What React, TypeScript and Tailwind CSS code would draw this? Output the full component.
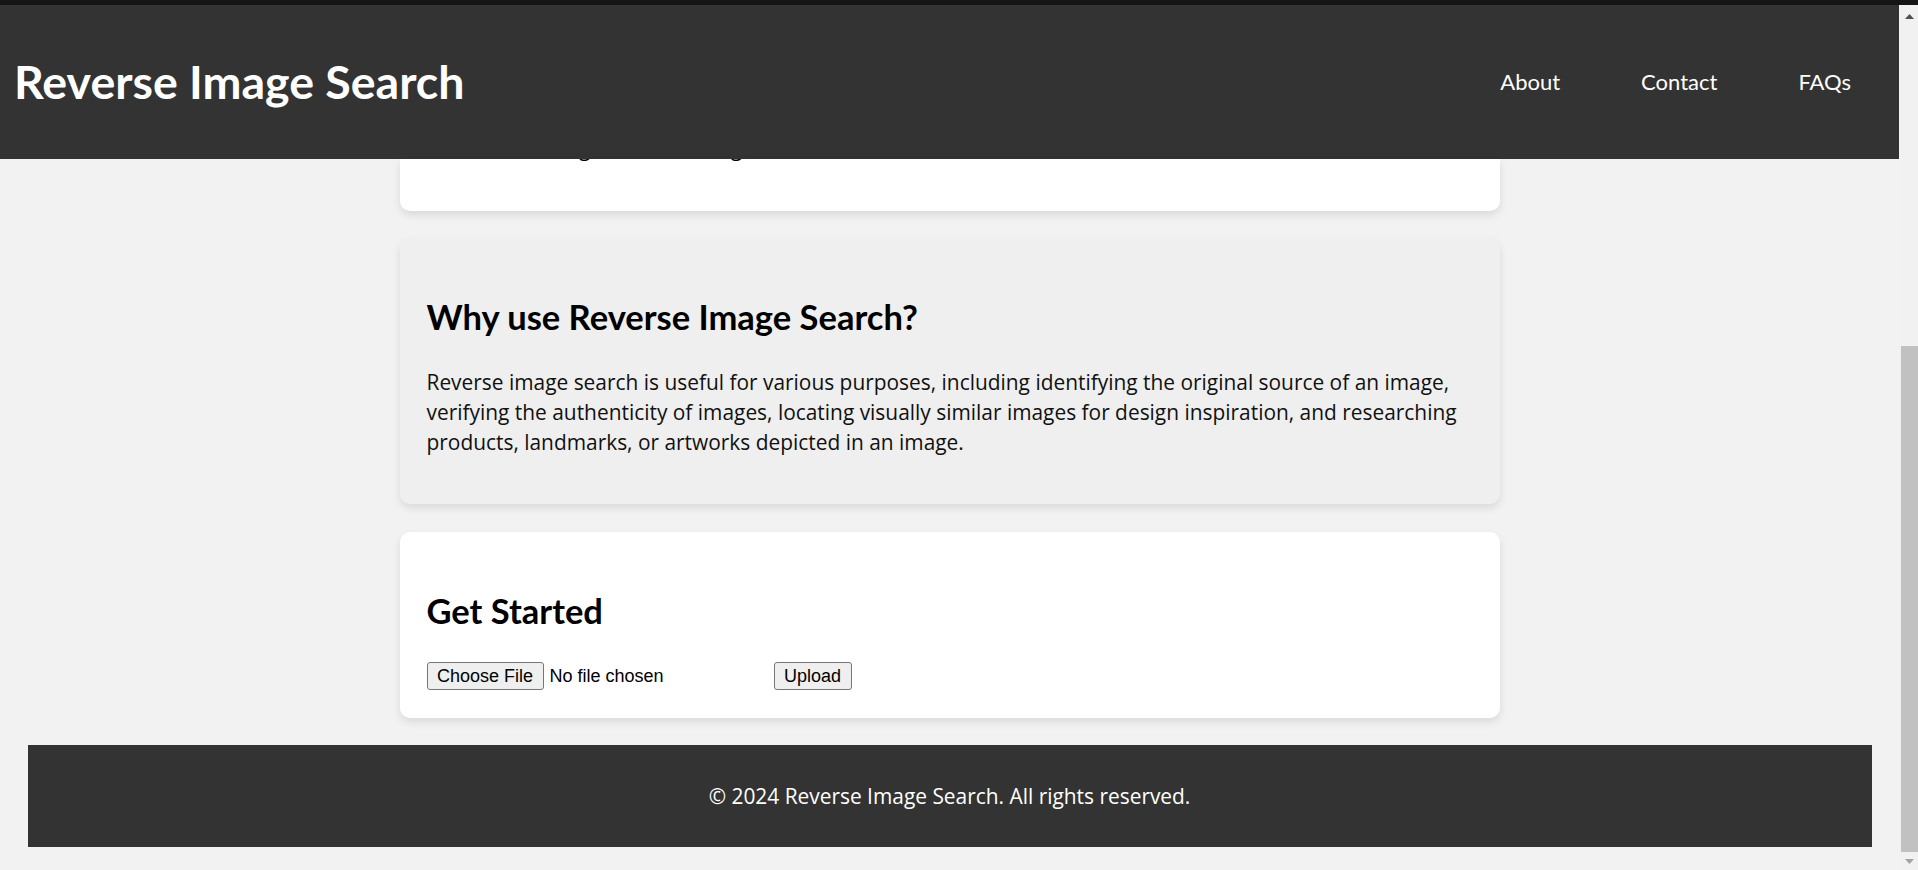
import React from "react";

function Card({
  children,
  className,
}: {
  children: React.ReactNode;
  className?: string;
}) {
  return (
    <section
      className={
        "rounded-[10px] shadow-[0_4px_8px_rgba(0,0,0,0.1)] px-[27px] " +
        (className ?? "")
      }
    >
      {children}
    </section>
  );
}

const body = "font-['Open_Sans',sans-serif]";

export default function App() {
  return (
    <div className="w-[1918px] h-[870px] overflow-hidden bg-[#f2f2f2] flex flex-col font-[Lato,sans-serif] text-black">
      <div className="h-[5px] shrink-0 bg-[#151515]" />
      <div className="flex flex-1 min-h-0">
        <div className="w-[1899px] shrink-0 flex flex-col">
          <header className="h-[154px] shrink-0 bg-[#333333] flex items-center justify-between pl-[14px] pr-[48px]">
            <h1 className="text-[46.5px] leading-[1.2] font-bold text-white">
              Reverse Image Search
            </h1>
            <nav className="flex items-center gap-[81px] text-[22px] leading-[1.2] text-white">
              <a>About</a>
              <a>Contact</a>
              <a>FAQs</a>
            </nav>
          </header>

          <main className="w-[1100px] mx-auto flex flex-col">
            {/* bottom of the first card, scrolled under the header */}
            <div className="h-[52px] bg-white rounded-b-[10px] shadow-[0_4px_8px_rgba(0,0,0,0.1)] px-[27px]">
              <div className="h-[2px] overflow-hidden">
                <p className={body + " -mt-[26px] text-[20.9px] leading-[30px] whitespace-nowrap"}>
                  a reference image to find its origin online.
                </p>
              </div>
            </div>

            <Card className="mt-[27px] bg-[#efefef] pt-[59px] pb-[47px]">
              <h2 className="text-[34.5px] leading-[40px] font-bold">
                Why use Reverse Image Search?
              </h2>
              <p className={body + " mt-[30px] text-[20.9px] leading-[30px] text-[#111]"}>
                Reverse image search is useful for various purposes, including
                identifying the original source of an image, verifying the
                authenticity of images, locating visually similar images for
                design inspiration, and researching products, landmarks, or
                artworks depicted in an image.
              </p>
            </Card>

            <Card className="mt-[28px] bg-white pt-[59px] pb-[28px]">
              <h2 className="text-[34.5px] leading-[40px] font-bold">
                Get Started
              </h2>
              <div className="mt-[31px] flex items-center font-['Liberation_Sans',Arial,sans-serif] text-[18px]">
                <div className="w-[347px] flex items-center">
                  <button className="h-[28px] px-[9.5px] border border-[#767676] bg-[#efefef] rounded-[3px] leading-none text-black">
                    Choose File
                  </button>
                  <span className="ml-[6px] leading-none">No file chosen</span>
                </div>
                <button className="h-[28px] px-[9.5px] border border-[#767676] bg-[#efefef] rounded-[3px] leading-none text-black">
                  Upload
                </button>
              </div>
            </Card>
          </main>

          <footer className={body + " mt-[27px] mx-[27.5px] h-[102px] pt-[2px] shrink-0 bg-[#333333] flex items-center justify-center text-white text-[20.9px]"}>
            <p>© 2024 Reverse Image Search. All rights reserved.</p>
          </footer>
        </div>

        {/* scrollbar */}
        <div className="w-[19px] shrink-0 flex flex-col bg-[#f1f1f1]">
          <div className="h-[22px] flex items-center justify-center pl-[2px]">
            <svg width="9" height="5" viewBox="0 0 9 5">
              <path d="M0 5 L4.5 0 L9 5 Z" fill="#505050" />
            </svg>
          </div>
          <div className="h-[319px]" />
          <div className="h-[506px] ml-[2px] bg-[#c1c1c1]" />
          <div className="flex-1 flex items-center justify-center pl-[2px]">
            <svg width="9" height="5" viewBox="0 0 9 5">
              <path d="M0 0 L9 0 L4.5 5 Z" fill="#a3a3a3" />
            </svg>
          </div>
        </div>
      </div>
    </div>
  );
}
